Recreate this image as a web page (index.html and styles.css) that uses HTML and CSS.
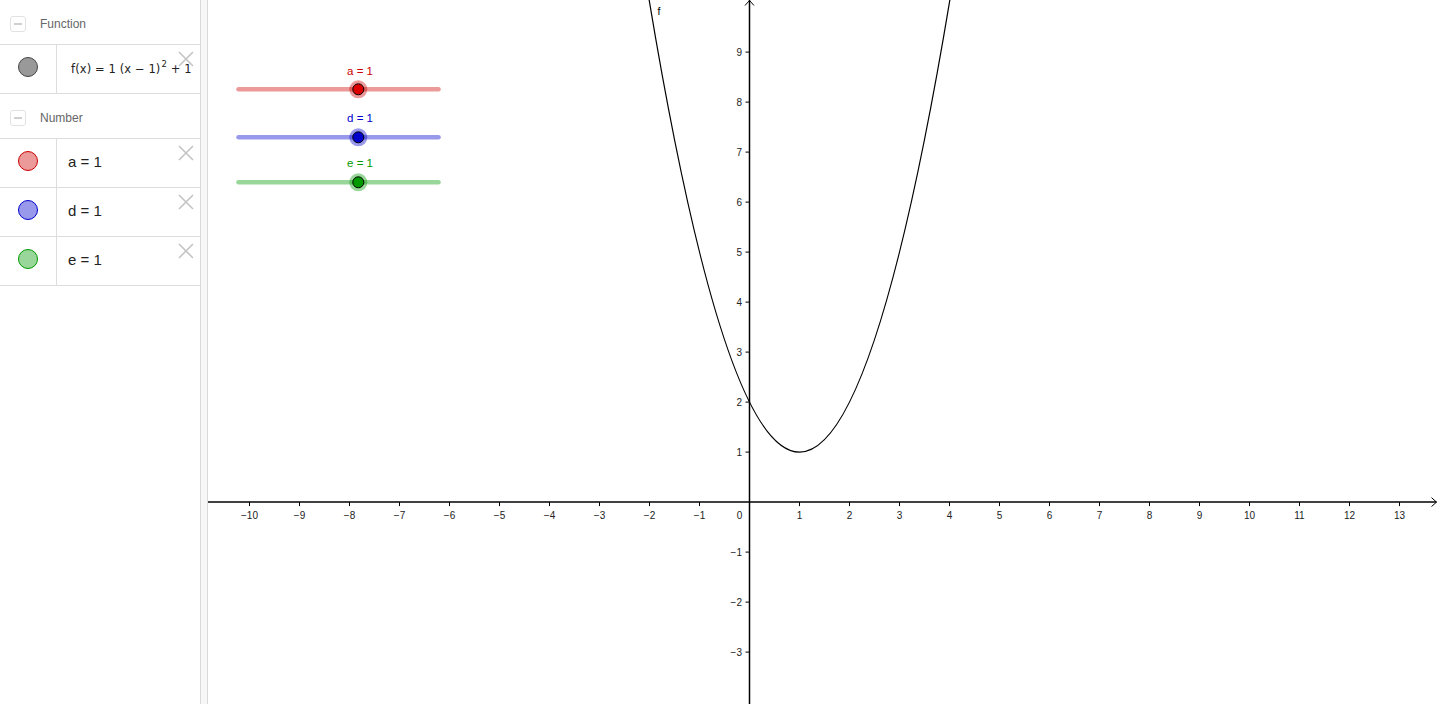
FILE: index.html
```html
<!DOCTYPE html>
<html>
<head>
<meta charset="utf-8">
<title>Graphing</title>
<link rel="stylesheet" href="styles.css">
</head>
<body>
<div class="app">
  <aside class="algebra">
    <div class="group-head"><span class="toggle"></span><span class="group-title">Function</span></div>
    <div class="item">
      <div class="marble-cell"><span class="marble m-func"></span></div>
      <div class="formula formula-func"><span>f(x) = 1 (x − 1)<sup>2</sup> + 1</span></div>
      <svg class="close" viewBox="0 0 16 16"><path d="M1 1L15 15M15 1L1 15"/></svg>
    </div>
    <div class="group-head"><span class="toggle"></span><span class="group-title">Number</span></div>
    <div class="item">
      <div class="marble-cell"><span class="marble m-a"></span></div>
      <div class="formula">a = 1</div>
      <svg class="close" viewBox="0 0 16 16"><path d="M1 1L15 15M15 1L1 15"/></svg>
    </div>
    <div class="item">
      <div class="marble-cell"><span class="marble m-d"></span></div>
      <div class="formula">d = 1</div>
      <svg class="close" viewBox="0 0 16 16"><path d="M1 1L15 15M15 1L1 15"/></svg>
    </div>
    <div class="item">
      <div class="marble-cell"><span class="marble m-e"></span></div>
      <div class="formula">e = 1</div>
      <svg class="close" viewBox="0 0 16 16"><path d="M1 1L15 15M15 1L1 15"/></svg>
    </div>
  </aside>
  <div class="splitter"></div>
  <main class="graphics">
    <svg class="plot" width="1232" height="704" viewBox="0 0 1232 704">
      <g transform="translate(0 0.6)">
      <g class="axes">
        <line x1="0" y1="501.5" x2="1228.5" y2="501.5"/>
        <polyline class="arrow" points="1223.5,497 1228.5,501.5 1223.5,506"/>
        <line x1="541.5" y1="-1" x2="541.5" y2="704"/>
        <polyline class="arrow" points="537,4.9 541.5,-0.1 546,4.9"/>
        <path class="ticks" d="M41.5 501.5v4M91.5 501.5v4M141.5 501.5v4M191.5 501.5v4M241.5 501.5v4M291.5 501.5v4M341.5 501.5v4M391.5 501.5v4M441.5 501.5v4M491.5 501.5v4M591.5 501.5v4M641.5 501.5v4M691.5 501.5v4M741.5 501.5v4M791.5 501.5v4M841.5 501.5v4M891.5 501.5v4M941.5 501.5v4M991.5 501.5v4M1041.5 501.5v4M1091.5 501.5v4M1141.5 501.5v4M1191.5 501.5v4M537.5 51.5h4M537.5 101.5h4M537.5 151.5h4M537.5 201.5h4M537.5 251.5h4M537.5 301.5h4M537.5 351.5h4M537.5 401.5h4M537.5 451.5h4M537.5 551.5h4M537.5 601.5h4M537.5 651.5h4"/>
      </g>
      <g class="xlabels">
        <text x="41.5" y="518">−10</text>
        <text x="91.5" y="518">−9</text>
        <text x="141.5" y="518">−8</text>
        <text x="191.5" y="518">−7</text>
        <text x="241.5" y="518">−6</text>
        <text x="291.5" y="518">−5</text>
        <text x="341.5" y="518">−4</text>
        <text x="391.5" y="518">−3</text>
        <text x="441.5" y="518">−2</text>
        <text x="491.5" y="518">−1</text>
        <text x="531.5" y="518">0</text>
        <text x="591.5" y="518">1</text>
        <text x="641.5" y="518">2</text>
        <text x="691.5" y="518">3</text>
        <text x="741.5" y="518">4</text>
        <text x="791.5" y="518">5</text>
        <text x="841.5" y="518">6</text>
        <text x="891.5" y="518">7</text>
        <text x="941.5" y="518">8</text>
        <text x="991.5" y="518">9</text>
        <text x="1041.5" y="518">10</text>
        <text x="1091.5" y="518">11</text>
        <text x="1141.5" y="518">12</text>
        <text x="1191.5" y="518">13</text>
      </g>
      <g class="ylabels">
        <text x="534" y="55.2">9</text>
        <text x="534" y="105.2">8</text>
        <text x="534" y="155.2">7</text>
        <text x="534" y="205.2">6</text>
        <text x="534" y="255.2">5</text>
        <text x="534" y="305.2">4</text>
        <text x="534" y="355.2">3</text>
        <text x="534" y="405.2">2</text>
        <text x="534" y="455.2">1</text>
        <text x="534" y="555.2">−1</text>
        <text x="534" y="605.2">−2</text>
        <text x="534" y="655.2">−3</text>
      </g>
      <path class="curve" d="M436.5,-29 Q591.5,932 746.5,-29"/>
      <text class="fname" x="449.5" y="14.5">f</text>
      </g>

      <g class="slider s-a">
        <text class="slabel" x="152" y="74.5">a = 1</text>
        <line class="track" x1="30.5" y1="89.3" x2="230.5" y2="89.3"/>
        <circle class="halo" cx="150.3" cy="89.3" r="9"/>
        <circle class="knob" cx="150.3" cy="89.3" r="5.5"/>
      </g>
      <g class="slider s-d">
        <text class="slabel" x="152" y="121.5">d = 1</text>
        <line class="track" x1="30.5" y1="137.3" x2="230.5" y2="137.3"/>
        <circle class="halo" cx="150.3" cy="137.3" r="9"/>
        <circle class="knob" cx="150.3" cy="137.3" r="5.5"/>
      </g>
      <g class="slider s-e">
        <text class="slabel" x="152" y="167">e = 1</text>
        <line class="track" x1="30.5" y1="182.3" x2="230.5" y2="182.3"/>
        <circle class="halo" cx="150.3" cy="182.3" r="9"/>
        <circle class="knob" cx="150.3" cy="182.3" r="5.5"/>
      </g>
    </svg>
  </main>
</div>
</body>
</html>
```

FILE: styles.css
```css
* { box-sizing: border-box; }
html, body { margin: 0; padding: 0; height: 100%; }
body {
  font-family: "Liberation Sans", Arial, sans-serif;
  background: #fff;
  overflow: hidden;
}
.app {
  display: flex;
  width: 1440px;
  height: 704px;
}
.algebra {
  width: 200px;
  flex: none;
  background: #fff;
}
.group-head {
  height: 45px;
  border-bottom: 1px solid #dddddd;
  display: flex;
  align-items: center;
  padding: 4px 0 0 10px;
}
.toggle {
  width: 16px;
  height: 16px;
  border: 1px solid #e2e2e2;
  border-radius: 3px;
  display: flex;
  align-items: center;
  justify-content: center;
}
.toggle::before {
  content: "";
  width: 8px;
  height: 2px;
  background: #cfcfcf;
}
.group-title {
  margin-left: 14px;
  font-size: 12px;
  color: #666;
}
.item {
  position: relative;
  display: flex;
  height: 49px;
  border-bottom: 1px solid #dddddd;
}
.marble-cell {
  width: 57px;
  flex: none;
  border-right: 1px solid #dddddd;
  display: flex;
  justify-content: center;
  padding-top: 12px;
}
.marble {
  width: 20px;
  height: 20px;
  border-radius: 50%;
  border: 1px solid;
}
.m-func { background: #999999; border-color: #444444; }
.m-a { background: #eb9999; border-color: #cc0000; }
.m-d { background: #9999eb; border-color: #0000cc; }
.m-e { background: #99d699; border-color: #009900; }
.formula {
  flex: 1;
  display: flex;
  align-items: center;
  padding-left: 11px;
  padding-bottom: 3px;
  font-size: 15px;
  color: #222;
  white-space: nowrap;
  overflow: hidden;
}
.formula-func {
  padding-left: 14px;
  padding-bottom: 1px;
  font-family: "DejaVu Sans", sans-serif;
  font-size: 11.5px;
  letter-spacing: 0.1px;
  word-spacing: 0;
}
.formula-func sup {
  font-size: 8.5px;
  vertical-align: baseline;
  position: relative;
  top: -6px;
  margin-left: 1px;
}
.close {
  position: absolute;
  right: 6px;
  top: 6px;
  width: 16px;
  height: 16px;
  fill: none;
  stroke: #c4c4c4;
  stroke-width: 1.6;
}
.splitter {
  width: 8px;
  flex: none;
  background: #f7f7f7;
  border-left: 1px solid #d9d9d9;
  border-right: 1px solid #d9d9d9;
}
.graphics {
  flex: 1;
  overflow: hidden;
}
.plot { display: block; }
.axes line, .axes .arrow, .axes .ticks {
  stroke: #000;
  stroke-width: 1.5;
  fill: none;
}
.axes .arrow { stroke-width: 1; }
.axes .ticks { stroke-width: 1; }
.xlabels text, .ylabels text {
  font-family: "Liberation Sans", Arial, sans-serif;
  font-size: 10px;
  fill: #222;
}
.xlabels text { text-anchor: middle; }
.ylabels text { text-anchor: end; }
.curve {
  fill: none;
  stroke: #000;
  stroke-width: 1.2;
}
.fname {
  font-family: "Liberation Sans", Arial, sans-serif;
  font-size: 10.5px;
  fill: #000;
}
.slabel {
  font-family: "Liberation Sans", Arial, sans-serif;
  font-size: 11.5px;
  text-anchor: middle;
}
.track {
  stroke-width: 4.5;
  stroke-linecap: round;
  stroke-opacity: 0.4;
}
.halo { fill-opacity: 0.4; }
.knob { stroke: #000; stroke-width: 1; }
.s-a .slabel { fill: #cc0000; }
.s-a .track, .s-a .halo { stroke: #cc0000; fill: #cc0000; }
.s-a .knob { fill: #dd0000; }
.s-d .slabel { fill: #0000cc; }
.s-d .track, .s-d .halo { stroke: #0000cc; fill: #0000cc; }
.s-d .knob { fill: #0000cc; }
.s-e .slabel { fill: #009900; }
.s-e .track, .s-e .halo { stroke: #009900; fill: #009900; }
.s-e .knob { fill: #009900; }
.halo { stroke: none !important; }
```
